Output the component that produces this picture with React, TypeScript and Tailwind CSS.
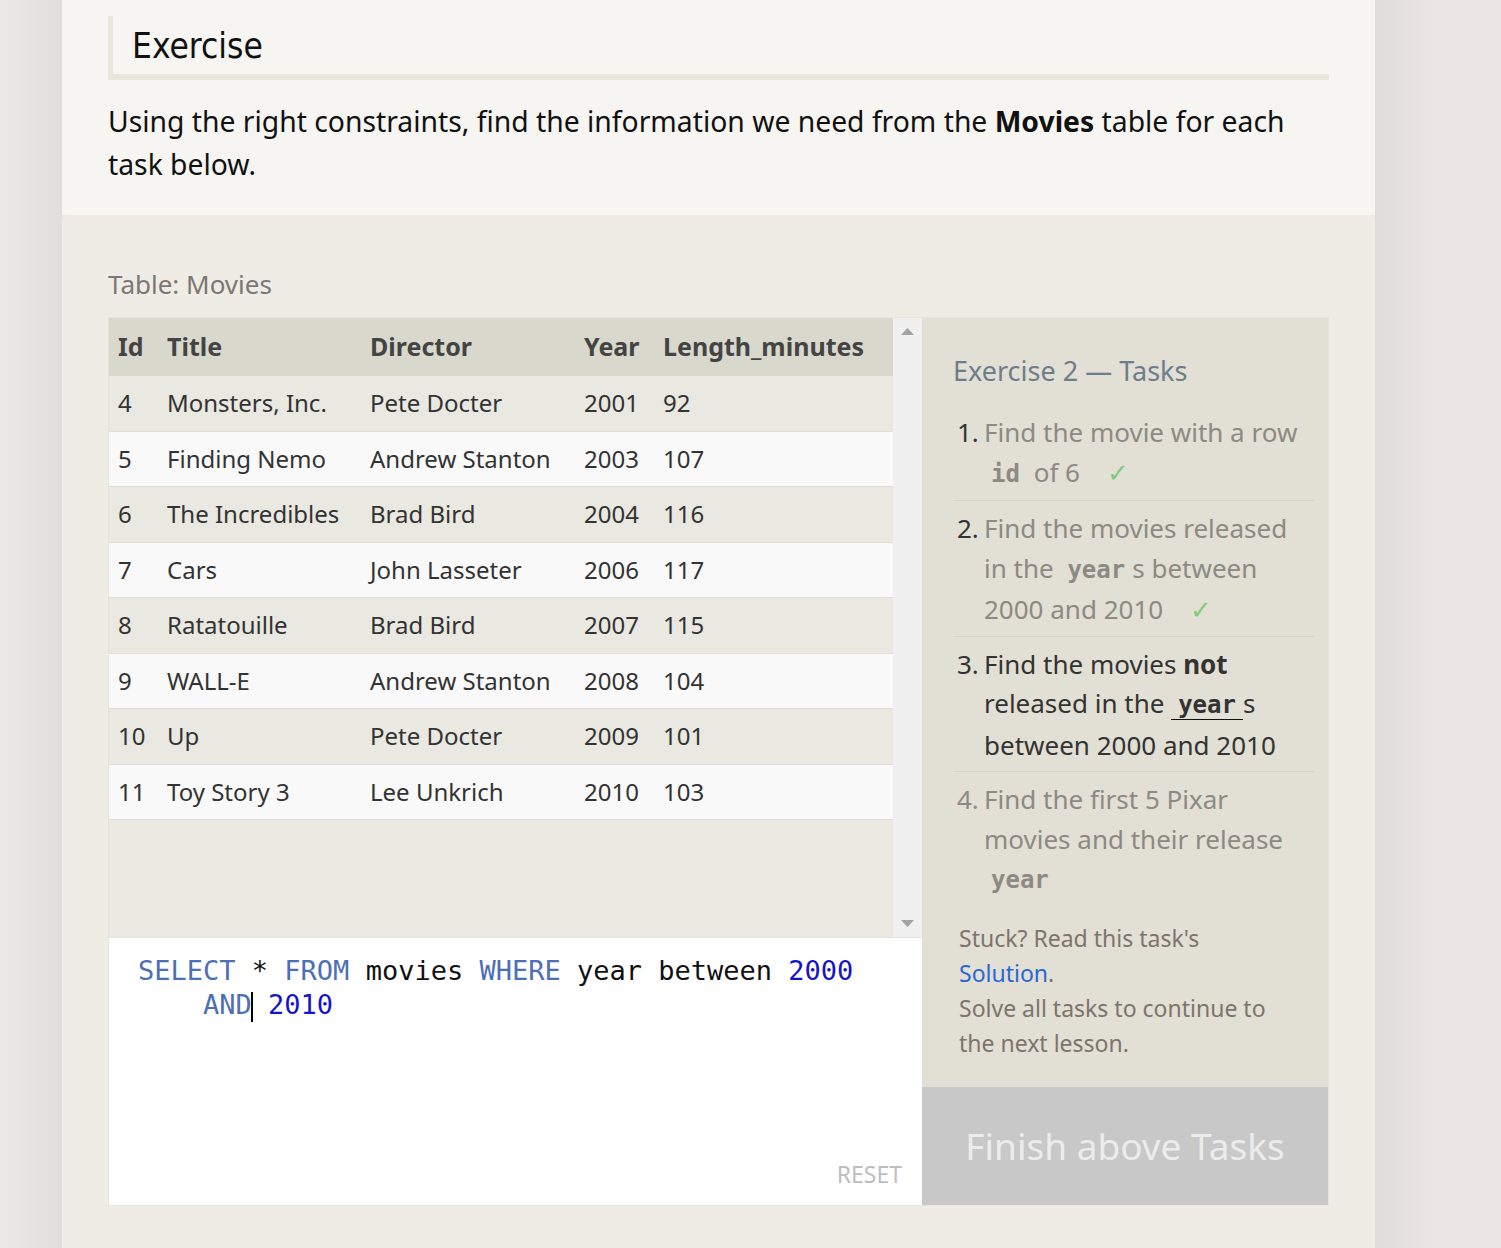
import React from "react";

const rows = [
  ["4", "Monsters, Inc.", "Pete Docter", "2001", "92"],
  ["5", "Finding Nemo", "Andrew Stanton", "2003", "107"],
  ["6", "The Incredibles", "Brad Bird", "2004", "116"],
  ["7", "Cars", "John Lasseter", "2006", "117"],
  ["8", "Ratatouille", "Brad Bird", "2007", "115"],
  ["9", "WALL-E", "Andrew Stanton", "2008", "104"],
  ["10", "Up", "Pete Docter", "2009", "101"],
  ["11", "Toy Story 3", "Lee Unkrich", "2010", "103"],
];

const sans = "font-['Noto_Sans',sans-serif]";
const mono = "font-['DejaVu_Sans_Mono',monospace]";

function Code({ children, underline }: { children: React.ReactNode; underline?: boolean }) {
  return (
    <span
      className={`${mono} font-bold text-[24px] px-[7px] ${underline ? "border-b border-[#111]" : ""}`}
    >
      {children}
    </span>
  );
}

function Check() {
  return <span className="ml-[20px] text-[#7ccc7c] font-light">✓</span>;
}

export default function App() {
  return (
    <div className={`min-h-[1248px] flex ${sans}`}>
      <div className="w-[62px] shrink-0 bg-gradient-to-r from-[#ece8e5] to-[#e2dedb]" />
      <div className="w-[1313px] shrink-0 flex flex-col bg-[#ebe7e3]">
        <div className="bg-[#f6f5f1] px-[46px] pt-[16px] h-[215px]">
          <div className="border-l-[5px] border-b-[6px] border-[#e8e7dc] h-[64px] pl-[19px] flex items-center">
            <h1 className="font-['DejaVu_Sans_Condensed','DejaVu_Sans',sans-serif] text-[35px] text-[#111] leading-none pt-[2px]">
              Exercise
            </h1>
          </div>
          <p className="mt-[20px] text-[28.3px] leading-[43px] text-[#111]">
            Using the right constraints, find the information we need from the <b>Movies</b> table for each task
            below.
          </p>
        </div>
        <div className="flex-1 bg-[#efece5] rounded-t-[6px] px-[46px] pt-[50px] pb-[43px]">
          <div className="text-[26px] text-[#7b7872] leading-[38px]">Table: Movies</div>
          <div className="mt-[14px] flex border border-[#e6e4dc]">
            <div className="w-[813px] flex flex-col">
              <div className="flex h-[619px]">
                <div className="w-[784px] bg-[#e9e8e1] text-[24px] text-[#333]">
                  <div className="grid grid-cols-[49px_203px_214px_79px_1fr] pl-[9px] h-[58px] items-center bg-[#d9d8cd] font-bold text-[25px] text-[#444]">
                    <div>Id</div>
                    <div>Title</div>
                    <div>Director</div>
                    <div>Year</div>
                    <div>Length_minutes</div>
                  </div>
                  {rows.map((r, i) => (
                    <div
                      key={r[0]}
                      className={`grid grid-cols-[49px_203px_214px_79px_1fr] pl-[9px] h-[55.5px] items-center border-b border-[#dfded7] ${
                        i % 2 === 0 ? "bg-[#e9e8e1]" : "bg-[#f9f9f9]"
                      }`}
                    >
                      {r.map((c, j) => (
                        <div key={j} className="whitespace-nowrap">
                          {c}
                        </div>
                      ))}
                    </div>
                  ))}
                </div>
                <div className="w-[29px] bg-[#f0f0f0] flex flex-col items-center justify-between py-[10px]">
                  <svg width="13" height="7" viewBox="0 0 13 7">
                    <polygon points="6.5,0 13,7 0,7" fill="#a3a3a3" />
                  </svg>
                  <svg width="13" height="7" viewBox="0 0 13 7">
                    <polygon points="0,0 13,0 6.5,7" fill="#a3a3a3" />
                  </svg>
                </div>
              </div>
              <div className="h-[268px] bg-white border-t border-[#e3e2dc] relative pl-[29px] pt-[16px]">
                <div className={`${mono} text-[27px] leading-[34px] whitespace-pre`}>
                  <div>
                    <span className="text-[#4d6fb5]">SELECT</span> <span className="text-[#111]">*</span>{" "}
                    <span className="text-[#4d6fb5]">FROM</span> <span className="text-[#111]">movies</span>{" "}
                    <span className="text-[#4d6fb5]">WHERE</span> <span className="text-[#111]">year between</span>{" "}
                    <span className="text-[#1414c8]">2000</span>
                  </div>
                  <div>
                    {"    "}
                    <span className="text-[#4d6fb5]">AND</span>
                    <span className="inline-block w-[2px] h-[30px] bg-black align-middle -ml-[1px] -mr-[1px]" />{" "}
                    <span className="text-[#1414c8]">2010</span>
                  </div>
                </div>
                <div className="absolute right-[20px] bottom-[14px] text-[23px] text-[#bdbdbd]">RESET</div>
              </div>
            </div>
            <div className="w-[407px] flex flex-col">
              <div className="flex-1 bg-[#e2dfd4] pl-[31px] pr-[14px] pt-[33px]">
                <div className="text-[27px] leading-[40px] text-[#6e7d8c]">Exercise 2 — Tasks</div>
                <ol className="mt-[22px] text-[26px] leading-[39.5px]">
                  <li className="flex pb-[6px] border-b border-[#d6d3c8]">
                    <span className="w-[31px] pl-[4px] shrink-0 text-[#333]">1.</span>
                    <span className="text-[#8c8a83] pr-[12px]">
                      Find the movie with a row <br />
                      <Code>id</Code> of 6 <Check />
                    </span>
                  </li>
                  <li className="flex pt-[8px] pb-[6px] border-b border-[#d6d3c8]">
                    <span className="w-[31px] pl-[4px] shrink-0 text-[#333]">2.</span>
                    <span className="text-[#8c8a83] pr-[12px]">
                      Find the movies released in the <Code>year</Code>s between 2000 and 2010 <Check />
                    </span>
                  </li>
                  <li className="flex pt-[8px] pb-[6px] border-b border-[#d6d3c8]">
                    <span className="w-[31px] pl-[4px] shrink-0 text-[#333]">3.</span>
                    <span className="text-[#333] pr-[12px]">
                      Find the movies <b>not</b> released in the <Code underline>year</Code>s between 2000 and 2010
                    </span>
                  </li>
                  <li className="flex pt-[8px]">
                    <span className="w-[31px] pl-[4px] shrink-0 text-[#8c8a83]">4.</span>
                    <span className="text-[#8c8a83] pr-[12px]">
                      Find the first 5 Pixar movies and their release <Code>year</Code>
                    </span>
                  </li>
                </ol>
                <div className="mt-[20px] pl-[6px] w-[330px] text-[23px] leading-[35px] text-[#7d746c]">
                  Stuck? Read this task's
                  <br />
                  <span className="text-[#2a66d6]">Solution</span>.
                  <br />
                  Solve all tasks to continue to the next lesson.
                </div>
              </div>
              <div className="h-[118px] bg-[#c8c8c8] flex items-center justify-center text-[37px] text-[#ececec]">
                Finish above Tasks
              </div>
            </div>
          </div>
        </div>
      </div>
      <div className="flex-1 bg-gradient-to-r from-[#e0dcd9] via-[#ebe6e3] to-[#ebe6e3]" />
    </div>
  );
}
